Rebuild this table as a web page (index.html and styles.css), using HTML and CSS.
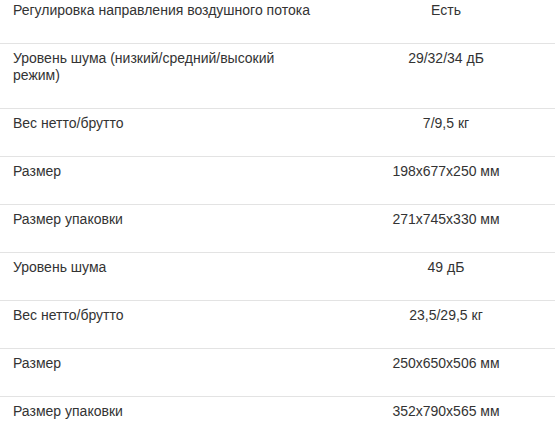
FILE: index.html
```html
<!DOCTYPE html>
<html lang="ru">
<head>
<meta charset="utf-8">
<link rel="stylesheet" href="styles.css">
</head>
<body>
<table class="specs">
  <tbody>
    <tr class="first"><td class="name">Регулировка направления воздушного потока</td><td class="val">Есть</td></tr>
    <tr><td class="name">Уровень шума (низкий/средний/высокий режим)</td><td class="val">29/32/34 дБ</td></tr>
    <tr><td class="name">Вес нетто/брутто</td><td class="val">7/9,5 кг</td></tr>
    <tr><td class="name">Размер</td><td class="val">198x677x250 мм</td></tr>
    <tr><td class="name">Размер упаковки</td><td class="val">271x745x330 мм</td></tr>
    <tr><td class="name">Уровень шума</td><td class="val">49 дБ</td></tr>
    <tr><td class="name">Вес нетто/брутто</td><td class="val">23,5/29,5 кг</td></tr>
    <tr><td class="name">Размер</td><td class="val">250x650x506 мм</td></tr>
    <tr><td class="name">Размер упаковки</td><td class="val">352x790x565 мм</td></tr>
  </tbody>
</table>
</body>
</html>
```
FILE: styles.css
```css
html, body {
  margin: 0;
  padding: 0;
  background: #fff;
}
body {
  font-family: "Liberation Sans", Arial, Helvetica, sans-serif;
  font-size: 14px;
  line-height: 17px;
  color: #333;
}
.specs {
  width: 555px;
  border-collapse: collapse;
  table-layout: fixed;
}
.specs td {
  vertical-align: top;
  padding: 6px 13px 24px;
  border-top: 1px solid #e3e3e3;
}
.specs tr.first td {
  border-top: none;
  padding-top: 2px;
}
.specs td.name {
  width: 302px;
  padding-right: 22px;
}
.specs td.val {
  text-align: center;
}
```
